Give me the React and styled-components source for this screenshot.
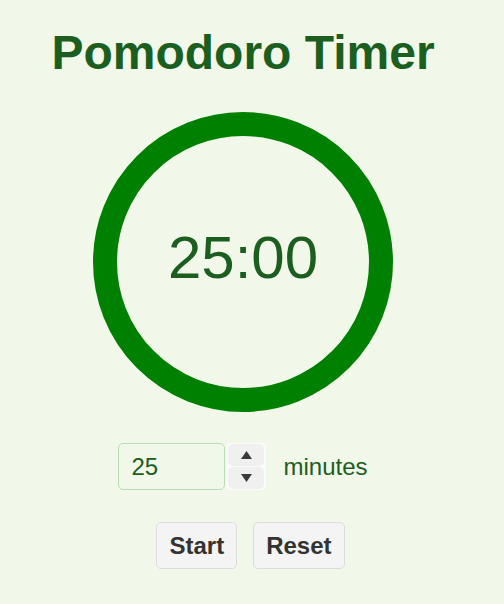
import React, { useState } from "react";
import styled, { createGlobalStyle } from "styled-components";

const GlobalStyle = createGlobalStyle`
  html, body {
    margin: 0;
    padding: 0;
    background: #f1f8e9;
  }
  body {
    font-family: "Liberation Sans", Arial, sans-serif;
  }
`;

const Page = styled.div`
  display: flex;
  flex-direction: column;
  align-items: center;
  padding: 25px 18px 32px 0;
  min-height: 100vh;
  box-sizing: border-box;
`;

const Title = styled.h1`
  margin: 0 0 32px;
  font-size: 48px;
  font-weight: 700;
  color: #1b5e20;
  line-height: normal;
`;

const Dial = styled.svg`
  display: block;
  width: 300px;
  height: 300px;
`;

const TimeText = styled.text`
  font-family: "Liberation Sans", Arial, sans-serif;
  font-size: 60px;
  fill: #1b5e20;
`;

const SettingsRow = styled.div`
  display: flex;
  align-items: center;
  margin-top: 31px;
`;

const MinutesInput = styled.input`
  box-sizing: border-box;
  width: 107px;
  height: 47px;
  padding: 0 12px;
  border: 1px solid #b9dcb4;
  border-radius: 5px;
  background: #f1f8e9;
  color: #1b5e20;
  font-family: "Liberation Sans", Arial, sans-serif;
  font-size: 24px;
  outline: none;
`;

const Spinner = styled.div`
  box-sizing: border-box;
  width: 40px;
  height: 47px;
  margin-left: 1px;
  padding: 1px 2px;
  display: flex;
  flex-direction: column;
  gap: 1px;
  background: #fbfbfb;
  border-radius: 5px;
`;

const SpinButton = styled.button`
  flex: 1;
  display: flex;
  align-items: center;
  justify-content: center;
  padding: 0;
  border: none;
  border-radius: 5px;
  background: #f0f0f0;
  cursor: pointer;
`;

const Arrow = styled.svg`
  display: block;
  width: 11px;
  height: 8px;
`;

const Label = styled.span`
  margin-left: 17px;
  font-size: 24px;
  color: #1b5e20;
`;

const ButtonRow = styled.div`
  display: flex;
  gap: 16px;
  margin-top: 32px;
  padding-left: 15px;
`;

const ActionButton = styled.button`
  box-sizing: border-box;
  height: 47px;
  padding: 0 12px;
  border: 1px solid #dcdcdc;
  border-radius: 5px;
  background: #f4f4f4;
  color: #333333;
  font-family: "Liberation Sans", Arial, sans-serif;
  font-size: 24px;
  font-weight: 700;
  cursor: pointer;
`;

function UpArrow() {
  return (
    <Arrow viewBox="0 0 11 8">
      <polygon points="5.5,0 11,8 0,8" fill="#3a3a3a" />
    </Arrow>
  );
}

function DownArrow() {
  return (
    <Arrow viewBox="0 0 11 8">
      <polygon points="0,0 11,0 5.5,8" fill="#3a3a3a" />
    </Arrow>
  );
}

export default function App() {
  const [minutes, setMinutes] = useState(25);
  const r = 138;
  const time = `${String(minutes).padStart(2, "0")}:00`;

  return (
    <>
      <GlobalStyle />
      <Page>
        <Title>Pomodoro Timer</Title>
        <Dial viewBox="0 0 300 300">
          <circle cx="150" cy="150" r={r} fill="none" stroke="#008000" strokeWidth="24" />
          <TimeText x="150" y="150" textAnchor="middle" dominantBaseline="middle">
            {time}
          </TimeText>
        </Dial>
        <SettingsRow>
          <MinutesInput
            type="text"
            value={minutes}
            onChange={(e) => setMinutes(Number(e.target.value) || 0)}
          />
          <Spinner>
            <SpinButton onClick={() => setMinutes((m) => m + 1)} aria-label="Increase">
              <UpArrow />
            </SpinButton>
            <SpinButton onClick={() => setMinutes((m) => Math.max(1, m - 1))} aria-label="Decrease">
              <DownArrow />
            </SpinButton>
          </Spinner>
          <Label>minutes</Label>
        </SettingsRow>
        <ButtonRow>
          <ActionButton>Start</ActionButton>
          <ActionButton>Reset</ActionButton>
        </ButtonRow>
      </Page>
    </>
  );
}
